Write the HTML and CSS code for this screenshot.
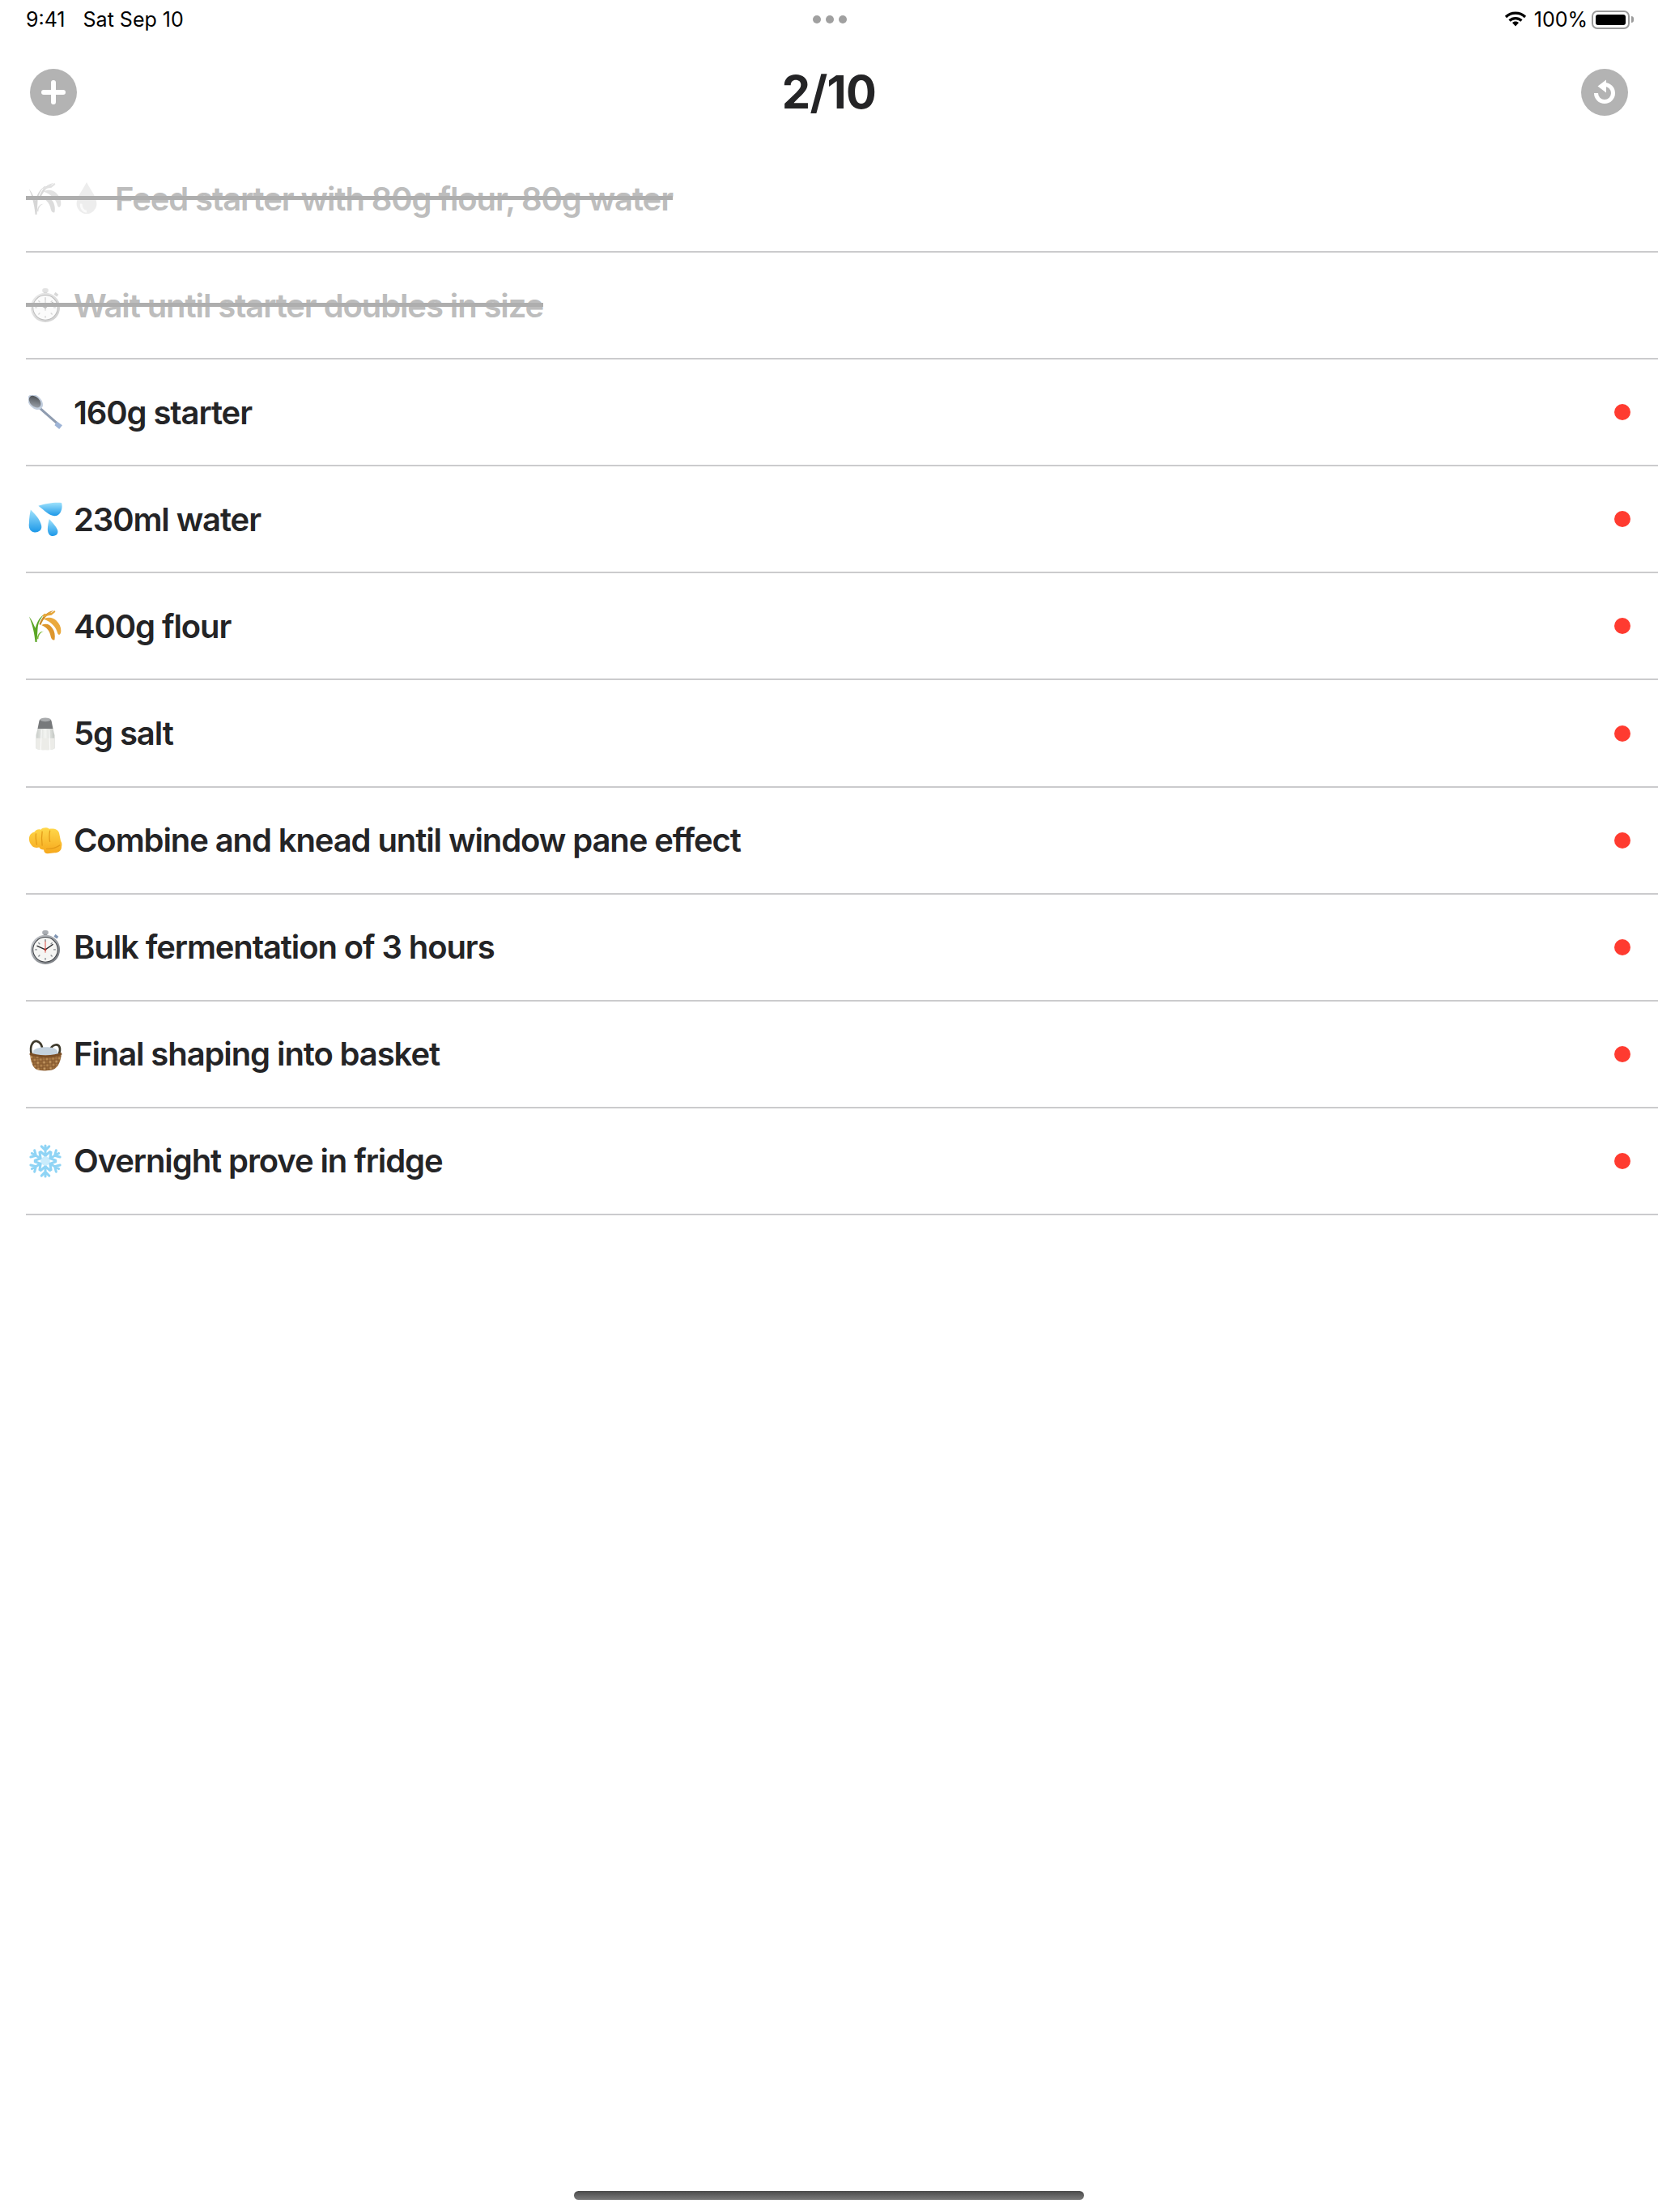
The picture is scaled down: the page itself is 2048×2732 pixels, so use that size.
FILE: index.html
```html
<!DOCTYPE html>
<html lang="en">
<head>
  <meta charset="UTF-8">
  <title>Sourdough</title>
  <link rel="stylesheet" href="styles.css">
</head>
<body>
  <svg class="defs" width="0" height="0">
    <defs>
      <linearGradient id="drop" x1="0" y1="0" x2="0" y2="1">
        <stop offset="0" stop-color="#9fe2fc"/>
        <stop offset="1" stop-color="#1c98e8"/>
      </linearGradient>
      <linearGradient id="fist" x1="0" y1="0" x2="0" y2="1">
        <stop offset="0" stop-color="#ffd84a"/>
        <stop offset="1" stop-color="#f6a81c"/>
      </linearGradient>
      <linearGradient id="spoon" x1="0" y1="0" x2="1" y2="1">
        <stop offset="0" stop-color="#3f4348"/>
        <stop offset="1" stop-color="#a8aeb6"/>
      </linearGradient>
      <linearGradient id="glass" x1="0" y1="0" x2="1" y2="0">
        <stop offset="0" stop-color="#c9cdc9"/>
        <stop offset=".5" stop-color="#f4f5f2"/>
        <stop offset="1" stop-color="#c4c8c4"/>
      </linearGradient>
      <linearGradient id="rim" x1="0" y1="0" x2="1" y2="1">
        <stop offset="0" stop-color="#c9ccd0"/>
        <stop offset="1" stop-color="#6f7378"/>
      </linearGradient>
      <pattern id="weave" width="8" height="8" patternUnits="userSpaceOnUse" patternTransform="rotate(-4)">
        <rect width="8" height="8" fill="#7f5229"/>
        <rect x="0.5" y="0.5" width="3" height="3" fill="#c69a62"/>
        <rect x="4.5" y="4.5" width="3" height="3" fill="#b98a52"/>
        <rect x="4.5" y="0.5" width="3" height="3" fill="#9a6c3a"/>
        <rect x="0.5" y="4.5" width="3" height="3" fill="#a57745"/>
      </pattern>

      <symbol id="e-rice" viewBox="0 0 44 44">
        <path d="M9 43C8 33 6 22 1 10c4 5 6 10 8 15 2-8 6-15 12-18-6 5-9 13-9 20l-1 16z" fill="#5aa524"/>
        <path d="M11 39c1-7 4-10 9-10-4 1-7 5-7 10z" fill="#7dbb3a"/>
        <path d="M14 20C18 9 24 4 33 2c-6 3-13 9-17 19z" fill="#c98a2a"/>
        <path d="M18 9l3-3 3 1 3-3 3 1 4-3 1 2-5 4-5 1-4 2z" fill="#e5a63a"/>
        <path d="M19 13c7-3 13-2 17 2 5 5 7 10 6 16-1 3-3 3-4 1-2-8-7-15-19-19z" fill="#eaa93d"/>
        <path d="M17 21c6-3 11-1 14 4 3 4 4 9 3 15-3 1-4-1-5-4-1-7-5-12-12-15z" fill="#dd962c"/>
      </symbol>

      <symbol id="e-drop" viewBox="0 0 44 44">
        <path d="M22 1c5 10 13 19 13 28a13 13 0 0 1-26 0C9 20 17 11 22 1z" fill="#a9d3f3"/>
        <path d="M15 29a7 9 0 0 0 7 10" fill="none" stroke="#e8f5fd" stroke-width="3"/>
      </symbol>

      <symbol id="e-stopwatch" viewBox="0 0 44 44">
        <rect x="18" y="0" width="8" height="6" rx="3" fill="#a9adb2"/>
        <rect x="20" y="5" width="4" height="4" fill="#85898e"/>
        <path d="M35 5l4 3-2 3-4-3z" fill="#7f95b3"/>
        <circle cx="22" cy="25" r="19" fill="url(#rim)"/>
        <circle cx="22" cy="25" r="16.5" fill="#3c3f44"/>
        <circle cx="22" cy="25" r="15.5" fill="#f5f5f3"/>
        <path d="M11 20l11 5 10-7" fill="none" stroke="#2a2a2e" stroke-width="1.4"/>
        <path d="M22 13v16" stroke="#d8443a" stroke-width="1"/>
        <circle cx="22" cy="25" r="1.5" fill="#b5352d"/>
        <path d="M22 11.5v3M22 35.5v3M8.5 25h3M32.5 25h3M13 34l2-2M29 32l2 2M13 16l2 2M29 18l2-2" stroke="#8b8f94" stroke-width="1.4"/>
      </symbol>

      <symbol id="e-spoon" viewBox="0 0 44 44">
        <path d="M15 17L40 39" stroke="#8f9cb0" stroke-width="3.2" stroke-linecap="round"/>
        <path d="M37 34l7 5-4 5-6-5z" fill="#9eb4d6"/>
        <ellipse cx="9" cy="9" rx="11.5" ry="8" transform="rotate(45 9 9)" fill="#c3cfdf"/>
        <ellipse cx="8.5" cy="8.5" rx="9" ry="6" transform="rotate(45 8.5 8.5)" fill="url(#spoon)"/>
      </symbol>

      <symbol id="e-sweat" viewBox="0 0 44 44">
        <path d="M13 5c8-3 21-5 30-4 2 7-1 17-9 17-7 0-13-7-21-13z" fill="url(#drop)"/>
        <path d="M3 10c4 4 13 13 14 21 1 7-6 9-10 8-5-1-7-6-6-12C1 21 2 15 3 10z" fill="url(#drop)"/>
        <path d="M27 22c3 3 10 11 11 15 1 5-3 7-6 7-5 0-7-4-7-9 0-4 1-9 2-13z" fill="url(#drop)"/>
      </symbol>

      <symbol id="e-salt" viewBox="0 0 44 44">
        <path d="M14 6c0-5 16-5 16 0l2 10H12z" fill="#77797b"/>
        <ellipse cx="22" cy="4" rx="7" ry="2.5" fill="#a8aaac"/>
        <path d="M12 16h20l2 8v17c-3 3-21 3-24 0V24z" fill="url(#glass)"/>
        <path d="M10 28h24v13c-3 3-21 3-24 0z" fill="#ecece8"/>
        <path d="M17 17l-1 26M27 17l1 26" stroke="#fff" stroke-width="1.2" opacity=".8"/>
      </symbol>

      <symbol id="e-fist" viewBox="0 0 44 44">
        <path d="M1 20c0-5 3-8 7-9 2-3 5-4 8-3 3-3 8-3 11-1 7-1 12 1 13 6l2 10c1 1 2 4 1 7 0 5-4 8-9 8l-9 1c-3 0-5-2-5-5-3 0-5-1-6-3-4 1-8 0-10-3-2-2-3-5-3-8z" fill="url(#fist)"/>
        <path d="M10 13c-1 5 0 10 1 15M18 10c-1 6-1 12 0 19M28 9c-1 5-1 11 0 15" stroke="#e39a18" stroke-width="1.3" fill="none"/>
        <path d="M23 33c6 0 13-1 18-5" stroke="#e39a18" stroke-width="1.3" fill="none"/>
      </symbol>

      <symbol id="e-basket" viewBox="0 0 44 44">
        <path d="M4 22C1 10 7 3 13 6c3 2 5 6 5 10" fill="none" stroke="#3f3a2c" stroke-width="2.8"/>
        <path d="M39 23c4-9 1-14-4-13-4 1-6 3-7 7" fill="none" stroke="#3f3a2c" stroke-width="2.8"/>
        <path d="M7 17c5-5 26-6 30 0l3 6H5z" fill="#c4d2de"/>
        <path d="M2 21c8 5 32 5 41 0-1 11-5 19-11 21-6 2-16 2-21 0C6 40 3 32 2 21z" fill="url(#weave)"/>
        <path d="M2 21c8 5 32 5 41 0" fill="none" stroke="#7a4e26" stroke-width="3"/>
      </symbol>

      <symbol id="e-snow" viewBox="0 0 44 44">
        <g fill="none" stroke="#8fd4f5" stroke-width="3.2" stroke-linecap="round">
          <path id="arm" d="M22 22V2M22 8l-5-5M22 8l5-5M22 15l-6-5M22 15l6-5"/>
          <use href="#arm" transform="rotate(60 22 22)"/>
          <use href="#arm" transform="rotate(120 22 22)"/>
          <use href="#arm" transform="rotate(180 22 22)"/>
          <use href="#arm" transform="rotate(240 22 22)"/>
          <use href="#arm" transform="rotate(300 22 22)"/>
        </g>
        <circle cx="22" cy="22" r="6" fill="#c9ecfc"/>
      </symbol>
    </defs>
  </svg>

  <div id="app">
    <div class="status-bar">
      <div class="status-left">
        <span>9:41</span>
        <span>Sat Sep 10</span>
      </div>
      <div class="status-dots">
        <i></i><i></i><i></i>
      </div>
      <div class="status-right">
        <svg class="wifi" viewBox="0 0 28 20" width="28" height="20">
          <path d="M2 7a17 17 0 0 1 24 0M6.5 11.5a11 11 0 0 1 15 0" fill="none" stroke="#000" stroke-width="3.2"/>
          <path d="M14 12.5c-1.600 0-3 .6-4 1.600l4 4.400 4-4.400c-1-1-2.400-1.600-4-1.600z"/>
        </svg>
        <span>100%</span>
        <div class="battery"><div class="battery-fill"></div></div>
        <div class="battery-cap"></div>
      </div>
    </div>

    <div class="toolbar">
      <button class="round-btn">
        <svg viewBox="0 0 58 58" width="58" height="58">
          <path d="M29 17v24M17 29h24" fill="none" stroke="#fff" stroke-width="6" stroke-linecap="round"/>
        </svg>
      </button>
      <h1 class="count">2/10</h1>
      <button class="round-btn">
        <svg viewBox="0 0 58 58" width="58" height="58">
          <path d="M29 19.5a10.5 10.5 0 1 1-10.5 10.5" fill="none" stroke="#fff" stroke-width="5"/>
          <path d="M31 13.5v16L20.5 21.5z" fill="#fff"/>
        </svg>
      </button>
    </div>

    <ul class="steps">
      <li class="step done">
        <div class="step-label">
          <svg class="emoji"><use href="#e-rice"/></svg>
          <svg class="emoji emoji-second"><use href="#e-drop"/></svg>
          <span>Feed starter with 80g flour, 80g water</span>
        </div>
      </li>
      <li class="step done">
        <div class="step-label">
          <svg class="emoji"><use href="#e-stopwatch"/></svg>
          <span>Wait until starter doubles in size</span>
        </div>
      </li>
      <li class="step">
        <div class="step-label"><svg class="emoji"><use href="#e-spoon"/></svg><span>160g starter</span></div>
        <i class="dot"></i>
      </li>
      <li class="step">
        <div class="step-label"><svg class="emoji"><use href="#e-sweat"/></svg><span>230ml water</span></div>
        <i class="dot"></i>
      </li>
      <li class="step">
        <div class="step-label"><svg class="emoji"><use href="#e-rice"/></svg><span>400g flour</span></div>
        <i class="dot"></i>
      </li>
      <li class="step">
        <div class="step-label"><svg class="emoji"><use href="#e-salt"/></svg><span>5g salt</span></div>
        <i class="dot"></i>
      </li>
      <li class="step">
        <div class="step-label"><svg class="emoji"><use href="#e-fist"/></svg><span>Combine and knead until window pane effect</span></div>
        <i class="dot"></i>
      </li>
      <li class="step">
        <div class="step-label"><svg class="emoji"><use href="#e-stopwatch"/></svg><span>Bulk fermentation of 3 hours</span></div>
        <i class="dot"></i>
      </li>
      <li class="step">
        <div class="step-label"><svg class="emoji"><use href="#e-basket"/></svg><span>Final shaping into basket</span></div>
        <i class="dot"></i>
      </li>
      <li class="step">
        <div class="step-label"><svg class="emoji"><use href="#e-snow"/></svg><span>Overnight prove in fridge</span></div>
        <i class="dot"></i>
      </li>
    </ul>

    <div class="home-bar"></div>
  </div>
</body>
</html>
```

FILE: styles.css
```css
* {
  box-sizing: border-box;
}

html,
body {
  margin: 0;
  padding: 0;
  background-color: #fff;
}

.defs {
  display: block;
  height: 0;
}

#app {
  display: flex;
  flex-direction: column;
  height: 2732px;
  font-family: Inter, "Liberation Sans", sans-serif;
  color: #242426;
}

/* status bar */
.status-bar {
  display: grid;
  grid-template-columns: 1fr auto 1fr;
  align-items: center;
  height: 48px;
  padding: 0 30px 0 32px;
  font-size: 25px;
  color: #000;
}

.status-left {
  display: flex;
  gap: 22px;
}

.status-dots {
  display: flex;
  gap: 6px;
}

.status-dots i {
  width: 10px;
  height: 10px;
  border-radius: 50%;
  background-color: #a0a0a0;
}

.status-right {
  display: flex;
  align-items: center;
  justify-content: flex-end;
}

.wifi {
  margin-right: 9px;
}

.battery {
  width: 47px;
  height: 23px;
  margin-left: 5px;
  padding: 3px;
  border: 2px solid #9b9b9b;
  border-radius: 7px;
}

.battery-fill {
  height: 100%;
  background-color: #000;
  border-radius: 3px;
}

.battery-cap {
  width: 3px;
  height: 8px;
  margin-left: 2px;
  background-color: #9b9b9b;
  border-radius: 0 3px 3px 0;
}

/* top toolbar */
.toolbar {
  display: flex;
  align-items: center;
  justify-content: space-between;
  height: 84px;
  margin-top: 24px;
  padding: 0 37px;
}

.round-btn {
  width: 58px;
  height: 58px;
  padding: 0;
  border: 0;
  border-radius: 50%;
  background-color: #b3b3b3;
}

.round-btn svg {
  display: block;
}

.count {
  margin: 0;
  font-size: 56px;
  font-weight: 700;
  line-height: 84px;
  letter-spacing: -.6px;
}

/* list */
.steps {
  margin: 24px 0 0 32px;
  padding: 0;
  list-style: none;
}

.step {
  display: flex;
  align-items: center;
  justify-content: space-between;
  height: 132.1px;
  padding-right: 34px;
  border-bottom: 2px solid #cbcbcd;
}

.step-label {
  position: relative;
  display: flex;
  align-items: center;
  font-size: 40px;
  font-weight: 600;
  letter-spacing: -1.1px;
  white-space: nowrap;
}

.emoji {
  flex: none;
  width: 42px;
  height: 42px;
  margin: 0 14px 0 3px;
}

.emoji-second {
  margin-left: -5px;
}

.dot {
  width: 20px;
  height: 20px;
  border-radius: 50%;
  background-color: #ff3b30;
}

.done .step-label {
  color: #bdbdbd;
}

.done .emoji {
  opacity: .35;
  filter: grayscale(1);
}

/* strike line runs over emoji and text */
.done .step-label::after {
  content: "";
  position: absolute;
  left: 0;
  right: 0;
  top: 50%;
  height: 5px;
  margin-top: -3px;
  background-color: #aeaeae;
}

.home-bar {
  width: 630px;
  height: 11px;
  margin: auto auto 15px;
  border-radius: 6px;
  background: linear-gradient(#4a4a4a, #7a7a7a);
}
```
